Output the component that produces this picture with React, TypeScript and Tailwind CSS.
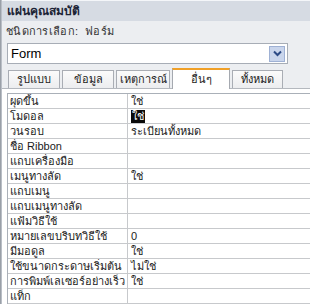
import React from "react";

const rows: { label: string; value: string; selected?: boolean }[] = [
  { label: "ผุดขึ้น", value: "ใช่" },
  { label: "โมดอล", value: "ใช่", selected: true },
  { label: "วนรอบ", value: "ระเบียนทั้งหมด" },
  { label: "ชื่อ Ribbon", value: "" },
  { label: "แถบเครื่องมือ", value: "" },
  { label: "เมนูทางลัด", value: "ใช่" },
  { label: "แถบเมนู", value: "" },
  { label: "แถบเมนูทางลัด", value: "" },
  { label: "แฟ้มวิธีใช้", value: "" },
  { label: "หมายเลขบริบทวิธีใช้", value: "0" },
  { label: "มีมอดูล", value: "ใช่" },
  { label: "ใช้ขนาดกระดาษเริ่มต้น", value: "ไม่ใช่" },
  { label: "การพิมพ์เลเซอร์อย่างเร็ว", value: "ใช่" },
  { label: "แท็ก", value: "" },
];

const tabs = [
  { label: "รูปแบบ", w: "w-[52px]" },
  { label: "ข้อมูล", w: "w-[52px]" },
  { label: "เหตุการณ์", w: "w-[54px]" },
  { label: "อื่นๆ", w: "w-[58px]", active: true },
  { label: "ทั้งหมด", w: "w-[51px]" },
];

export default function App() {
  return (
    <div
      className="w-[310px] h-[304px] overflow-hidden bg-[#eceef1] border-l border-[#9aa0a8] flex flex-col text-[11px] text-[#1b1b1b]"
      style={{ fontFamily: 'Tahoma, "Liberation Sans", "Noto Sans", sans-serif' }}
    >
      <div className="border-l border-[#b9bec6] flex flex-col h-full">
        {/* title bar */}
        <div className="h-[21px] border-t border-[#f4f6f9] bg-[#d6dbe3] flex items-center pl-[5px] font-bold text-[12px] text-[#1c2436]">
          แผ่นคุณสมบัติ
        </div>
        {/* selection type */}
        <div className="h-[21px] flex items-center pl-[4px] text-[#333] tracking-[0.3px]">
          ชนิดการเลือก:&nbsp; ฟอร์ม
        </div>
        {/* dropdown */}
        <div className="pl-[5px] pt-[1px]">
          <div className="w-[281px] h-[21px] bg-white border border-[#a7adb6] flex items-center justify-between pl-[3px] pr-[2px]">
            <span className="text-[13px] text-black" style={{ fontFamily: '"Liberation Sans", sans-serif' }}>
              Form
            </span>
            <div className="w-[16px] h-[16px] bg-[#c9d5ec] border border-[#9fb1d4] flex items-center justify-center">
              <svg width="9" height="7" viewBox="0 0 9 7">
                <path d="M1 1.5 L4.5 5 L8 1.5" fill="none" stroke="#2c4a86" strokeWidth="2" />
              </svg>
            </div>
          </div>
        </div>
        {/* tabs */}
        <div className="h-[26px] flex items-end pl-[6px] gap-[2px] border-b border-[#b4b8be] mt-[-1px]">
          {tabs.map((t) =>
            t.active ? (
              <div
                key={t.label}
                className={`${t.w} h-[21px] bg-white border-t-2 border-t-[#f0a028] border-x border-x-[#a5a9b0] flex items-center justify-center mb-[-1px] pb-[1px]`}
              >
                {t.label}
              </div>
            ) : (
              <div
                key={t.label}
                className={`${t.w} h-[18px] bg-gradient-to-b from-[#fbfbfb] to-[#ecedef] border border-[#a9adb4] border-b-0 flex items-center justify-center`}
              >
                {t.label}
              </div>
            )
          )}
        </div>
        {/* pane */}
        <div className="flex-1 bg-white pt-[4px]">
          <div className="ml-[5px] border-l border-t border-[#aab0b8]">
            {rows.map((r) => (
              <div key={r.label} className="h-[15px] flex border-b border-[#c7c9cc]">
                <div className="w-[120px] shrink-0 border-r border-[#c7c9cc] pl-[2px] flex items-center whitespace-nowrap overflow-hidden">
                  {r.label}
                </div>
                <div className="flex-1 pl-[3px] flex items-center whitespace-nowrap">
                  {r.selected ? (
                    <span className="bg-[#0a0a0a] text-white leading-[13px] px-[1px]">{r.value}</span>
                  ) : (
                    r.value
                  )}
                </div>
              </div>
            ))}
          </div>
        </div>
      </div>
    </div>
  );
}
